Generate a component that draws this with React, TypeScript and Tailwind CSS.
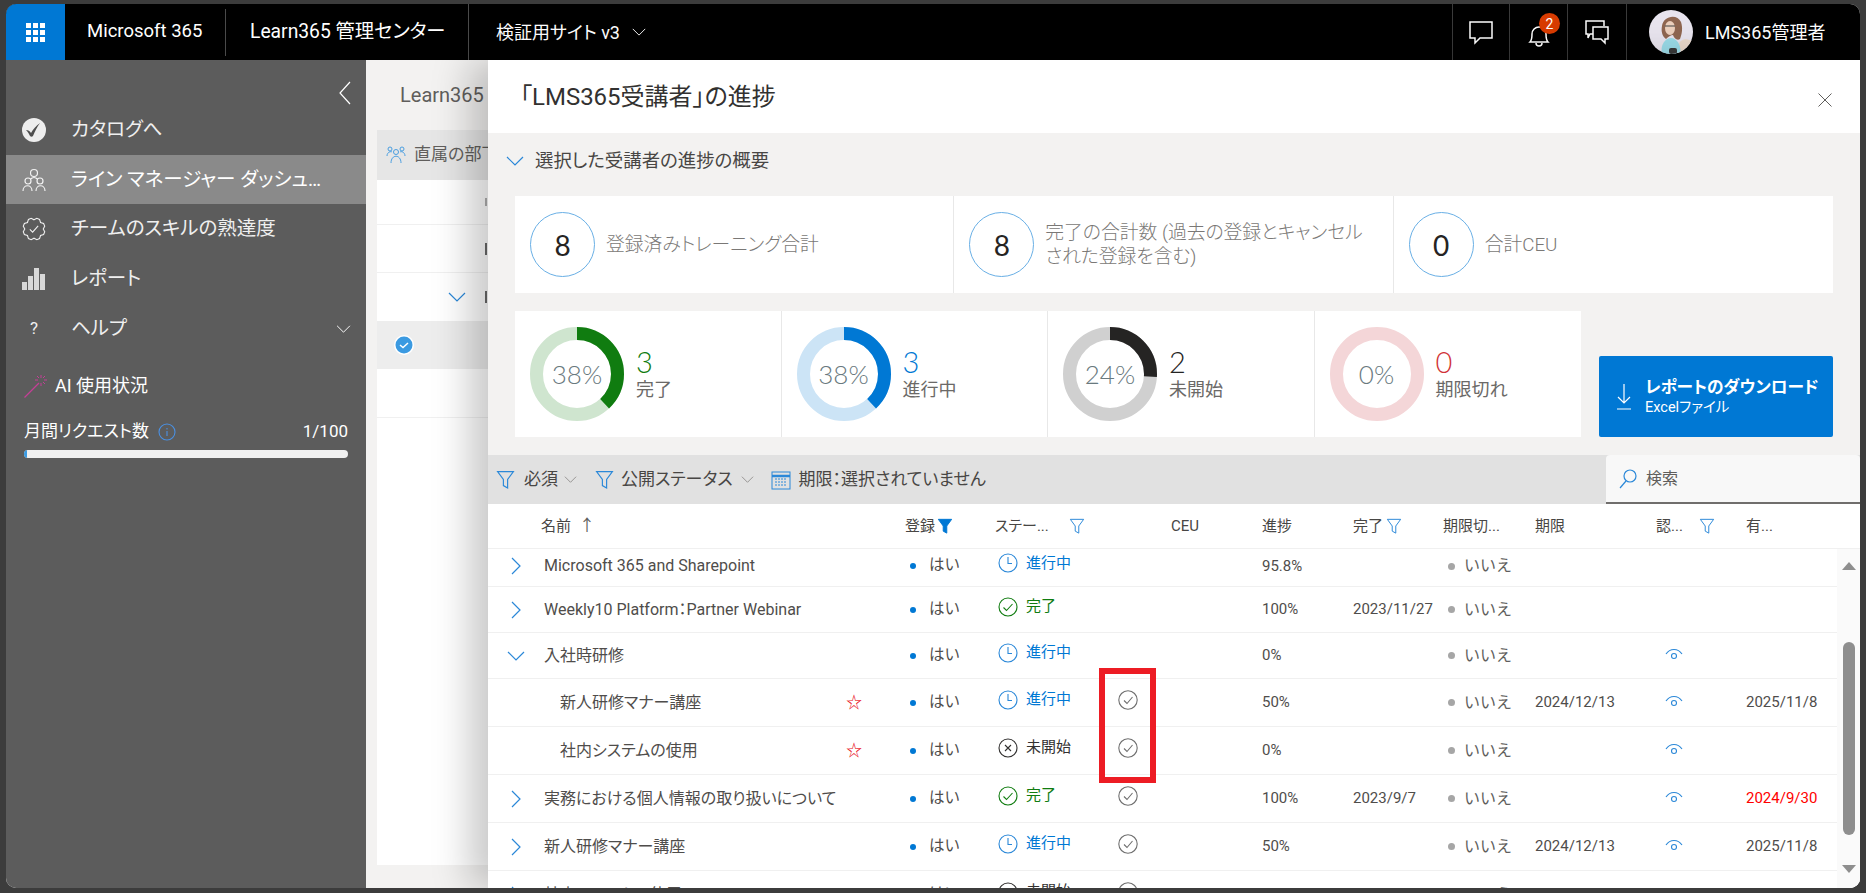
const COLS = 'grid grid-cols-[417px_90px_113px_63px_91px_91px_90px_92px_121px_90px_91px]';

type Status = 'progress' | 'done' | 'none';

interface Row {
  name: string;
  child?: boolean;
  open?: boolean;
  status: Status;
  check?: boolean;
  progress: string;
  completed?: string;
  due?: string;
  eye?: boolean;
  expiry?: string;
  expired?: boolean;
  height: string;
}

const rows: Row[] = [
  { name: 'Microsoft 365 and Sharepoint', status: 'progress', progress: '95.8%', height: 'h-[38px] pb-[3px]' },
  { name: 'Weekly10 Platform：Partner Webinar', status: 'done', progress: '100%', completed: '2023/11/27', height: 'h-[46px]' },
  { name: '入社時研修', open: true, status: 'progress', progress: '0%', eye: true, height: 'h-[46px]' },
  { name: '新人研修マナー講座', child: true, status: 'progress', check: true, progress: '50%', due: '2024/12/13', eye: true, expiry: '2025/11/8', height: 'h-[48px]' },
  { name: '社内システムの使用', child: true, status: 'none', check: true, progress: '0%', eye: true, height: 'h-[48px]' },
  { name: '実務における個人情報の取り扱いについて', status: 'done', check: true, progress: '100%', completed: '2023/9/7', eye: true, expiry: '2024/9/30', expired: true, height: 'h-[48px]' },
  { name: '新人研修マナー講座', status: 'progress', check: true, progress: '50%', due: '2024/12/13', eye: true, expiry: '2025/11/8', height: 'h-[48px]' },
  { name: '社内システムの使用', status: 'none', check: true, progress: '0%', eye: true, height: 'h-[48px]' },
];

// scalloped outline of the skills badge
const badgePoints = Array.from({ length: 24 }, (_, i) => {
  const a = (i / 24) * Math.PI * 2;
  const r = i % 3 === 0 ? 10 : 12;
  return `${(13 + r * Math.sin(a)).toFixed(1)},${(13 - r * Math.cos(a)).toFixed(1)}`;
}).join(' ');

function Funnel({ solid = false, className = 'h-[19px] w-[19px]' }: { solid?: boolean; className?: string }) {
  return (
    <svg viewBox="0 0 18 18" className={className} fill={solid ? '#0078d4' : 'none'} stroke={solid ? '#0078d4' : '#2b88d8'} strokeWidth="1.1">
      <path d="M1.5 1.5h15l-5.5 7.5v8l-4-2.200V9z" />
    </svg>
  );
}

function ChevronDown({ className = 'h-[10px] w-[18px]', color = '#2b88d8' }: { className?: string; color?: string }) {
  return (
    <svg viewBox="0 0 18 10" className={className} fill="none" stroke={color} strokeWidth="1.2">
      <path d="M1 1l8 8 8-8" />
    </svg>
  );
}

function ChevronRight() {
  return (
    <svg viewBox="0 0 10 18" className="h-[18px] w-[10px]" fill="none" stroke="#2b88d8" strokeWidth="1.2">
      <path d="M1 1l8 8-8 8" />
    </svg>
  );
}

function StatusBadge({ status }: { status: Status }) {
  if (status === 'progress') {
    return (
      <div className="flex items-center gap-[8px] pb-[6px] text-[#0078d4]">
        <svg viewBox="0 0 20 20" className="h-[20px] w-[20px]" fill="none" stroke="#2b88d8" strokeWidth="1.1">
          <circle cx="10" cy="10" r="9" />
          <path d="M10 4v6.500h4" />
        </svg>
        <span>進行中</span>
      </div>
    );
  }
  if (status === 'done') {
    return (
      <div className="flex items-center gap-[8px] pb-[6px] text-[#107c10]">
        <svg viewBox="0 0 20 20" className="h-[20px] w-[20px]" fill="none" stroke="#107c10" strokeWidth="1.1">
          <circle cx="10" cy="10" r="9" />
          <path d="M5.500 10.500l3 3 6-6.500" />
        </svg>
        <span>完了</span>
      </div>
    );
  }
  return (
    <div className="flex items-center gap-[8px] pb-[6px] text-[#323130]">
      <svg viewBox="0 0 20 20" className="h-[20px] w-[20px]" fill="none" stroke="#323130" strokeWidth="1.1">
        <circle cx="10" cy="10" r="9" />
        <path d="M7 7l6 6M13 7l-6 6" />
      </svg>
      <span>未開始</span>
    </div>
  );
}

function Donut({ pct, shown, label, count, arc, track, countColor }: { pct: number; shown: number; label: string; count: number; arc: string; track: string; countColor: string }) {
  const r = 40.5;
  const len = 2 * Math.PI * r;
  return (
    <div className="flex items-center gap-[12px] border-r border-[#e8e8e8] pl-[15px] last:border-r-0">
      <div className="relative h-[94px] w-[94px]">
        <svg viewBox="0 0 94 94" className="h-[94px] w-[94px] -rotate-90">
          <circle cx="47" cy="47" r={r} fill="none" stroke={track} strokeWidth="13" />
          <circle cx="47" cy="47" r={r} fill="none" stroke={arc} strokeWidth="13" strokeDasharray={`${(len * pct) / 100} ${len}`} />
        </svg>
        <div className="absolute inset-0 flex items-center justify-center font-['Lato'] text-[26px] font-light text-[#69797e]">{shown}%</div>
      </div>
      <div className="flex flex-col">
        <span className="font-['Lato'] text-[29px] leading-[32px] font-light" style={{ color: countColor }}>{count}</span>
        <span className="text-[18px] leading-[24px] text-[#6b6967]">{label}</span>
      </div>
    </div>
  );
}

function Total({ value, children }: { value: number; children: React.ReactNode }) {
  return (
    <div className="flex items-center gap-[11px] border-r border-[#e8e8e8] pl-[15px] last:border-r-0">
      <div className="flex h-[65px] w-[65px] shrink-0 items-center justify-center rounded-full border border-[#69afe5] font-['Lato'] text-[28px] text-[#252423]">{value}</div>
      <div className="w-[325px] text-[18.800px] leading-[24px] font-light text-[#7a7876]">{children}</div>
    </div>
  );
}

function NavItem({ icon, label, active = false, trailing }: { icon: React.ReactNode; label: string; active?: boolean; trailing?: React.ReactNode }) {
  return (
    <div className={`flex items-center pr-[15px] pl-[16px] ${active ? 'h-[49px] bg-[#8a8a8a] pr-[33px] text-white' : 'h-[50px] text-[#efefef]'}`}>
      <div className="flex w-[24px] shrink-0 items-center justify-center">{icon}</div>
      <span className="ml-[25px] flex-1 truncate text-[19.5px]">{label}</span>
      {trailing}
    </div>
  );
}

function App() {
  return (
    <div className="h-[893px] w-[1866px] overflow-hidden bg-[#3c3c3c] pt-[4px] pr-[6px] pb-[5px] pl-[6px] font-['Roboto','Noto_Sans_CJK_JP',sans-serif] [font-feature-settings:'palt']">
      <div className="flex h-full flex-col overflow-hidden rounded-[10px] bg-white">
        {/* Top bar */}
        <header className="flex h-[56px] shrink-0 items-center bg-black text-white">
          <div className="flex h-full w-[59px] items-center justify-center bg-[#0078d4]">
            <svg viewBox="0 0 19 19" className="h-[19px] w-[19px]" fill="white">
              <rect x="0" y="0" width="5" height="5" /><rect x="7" y="0" width="5" height="5" /><rect x="14" y="0" width="5" height="5" />
              <rect x="0" y="7" width="5" height="5" /><rect x="7" y="7" width="5" height="5" /><rect x="14" y="7" width="5" height="5" />
              <rect x="0" y="14" width="5" height="5" /><rect x="7" y="14" width="5" height="5" /><rect x="14" y="14" width="5" height="5" />
            </svg>
          </div>
          <div className="flex h-[47px] w-[161px] items-center border-r border-[#4a4a4a] pl-[22px] text-[18.500px]">Microsoft 365</div>
          <div className="flex h-full w-[243px] items-center border-r border-[#4a4a4a] pl-[24px] text-[19.300px]">Learn365 管理センター</div>
          <div className="flex items-center gap-[12px] pl-[27px] text-[18px]">
            <span>検証用サイト v3</span>
            <ChevronDown className="h-[8px] w-[14px]" color="#ffffff" />
          </div>
          <div className="ml-auto flex h-full">
            <div className="flex w-[58px] items-center justify-center border-x border-[#3a3a3a]">
              <svg viewBox="0 0 26 26" className="h-[26px] w-[26px]" fill="none" stroke="white" strokeWidth="1.5">
                <path d="M2 3h22v16H12l-5 5v-5H2z" />
              </svg>
            </div>
            <div className="relative flex w-[58px] items-center justify-center border-r border-[#3a3a3a]">
              <svg viewBox="0 0 24 26" className="mt-[5px] h-[26px] w-[24px]" fill="none" stroke="white" strokeWidth="1.5">
                <path d="M3 20c2-2 2-4 2-8a7 7 0 0114 0c0 4 0 6 2 8z" />
                <path d="M9 21c0 4 6 4 6 0" />
              </svg>
              <div className="absolute top-[9px] left-[29px] flex h-[21px] w-[21px] items-center justify-center rounded-full bg-[#d83b01] text-[14px] leading-none">2</div>
            </div>
            <div className="flex w-[59px] items-center justify-center border-r border-[#3a3a3a]">
              <svg viewBox="0 0 26 26" className="h-[26px] w-[26px]" fill="none" stroke="white" strokeWidth="1.5">
                <path d="M9 15H6l-2 4v-4H2V2h18v5" />
                <path d="M9 8h15v12h-3v4l-4-4H9z" />
              </svg>
            </div>
            <div className="flex w-[233px] items-center pl-[22px]">
              <svg viewBox="0 0 44 44" className="h-[44px] w-[44px] rounded-full">
                <rect width="44" height="44" fill="#e8e4ee" />
                <path d="M28 44c0-9 2-14 9-15l7 2v13z" fill="#ead9ca" />
                <path d="M13 44c-2-9 3-16 9-16s11 8 9 16z" fill="#9adbe8" />
                <path d="M13 16c1-10 15-13 19-4 2 6 1 12-1 17-3 2-6-1-7-4-2 0-5 2-7 4-4-3-5-8-4-13z" fill="#8f6650" />
                <ellipse cx="21" cy="18" rx="5" ry="7" fill="#ecd0bd" />
                <path d="M16 16h10" stroke="#444" strokeWidth="1.2" />
                <rect x="20" y="38" width="8" height="6" rx="2" fill="#3a3a3a" />
              </svg>
              <span className="ml-[12px] text-[18px]">LMS365管理者</span>
            </div>
          </div>
        </header>

        <div className="flex min-h-0 flex-1">
          {/* Left nav */}
          <aside className="flex w-[360px] shrink-0 flex-col bg-[#5c5c5c]">
            <div className="flex h-[45px] items-end justify-end pr-[15px]">
              <svg viewBox="0 0 12 24" className="h-[24px] w-[12px]" fill="none" stroke="white" strokeWidth="1.2">
                <path d="M11 1L1 12l10 11" />
              </svg>
            </div>
            <div>
              <NavItem
                label="カタログへ"
                icon={
                  <svg viewBox="0 0 24 24" className="h-[24px] w-[24px]">
                    <circle cx="12" cy="12" r="12" fill="#eeeeee" />
                    <path d="M4 12c2 0 4 1 5 3 2-4 5-7 9-10-3 4-5 8-7 13-1 1-2 1-3 0-1-2-2-4-4-6z" fill="#4f4f4f" />
                  </svg>
                }
              />
              <NavItem
                active
                label="ライン マネージャー ダッシュボード"
                icon={
                  <svg viewBox="0 0 24 24" className="h-[24px] w-[24px]" fill="none" stroke="#f2f2f2" strokeWidth="1.2">
                    <circle cx="12" cy="5" r="3.500" />
                    <circle cx="6" cy="13" r="3" />
                    <circle cx="18" cy="13" r="3" />
                    <path d="M1 23c0-7 9-7 9 0M14 23c0-7 9-7 9 0M8.500 11c2-2 5-2 7 0" />
                  </svg>
                }
              />
              <NavItem
                label="チームのスキルの熟達度"
                icon={
                  <svg viewBox="0 0 26 26" className="h-[26px] w-[26px]" fill="none" stroke="#efefef" strokeWidth="1.2">
                    <polygon points={badgePoints} />
                    <path d="M8.500 13.500l3 3 6-7" />
                  </svg>
                }
              />
              <NavItem
                label="レポート"
                icon={
                  <svg viewBox="0 0 24 22" className="h-[22px] w-[24px]" fill="#d8d8d8">
                    <rect x="0" y="14" width="5" height="8" />
                    <rect x="6" y="8" width="5" height="14" />
                    <rect x="12" y="0" width="5" height="22" />
                    <rect x="18" y="6" width="5" height="16" />
                  </svg>
                }
              />
              <NavItem
                label="ヘルプ"
                icon={<span className="text-[17px]">?</span>}
                trailing={<ChevronDown className="h-[8px] w-[15px]" color="#ffffff" />}
              />
            </div>
            <div className="mt-[18px] flex items-center gap-[7px] pl-[18px] text-white">
              <svg viewBox="0 0 24 24" className="h-[24px] w-[24px]" fill="none" stroke="#c43e96" strokeWidth="1.2">
                <path d="M0.500 23.500L15 9" />
                <path d="M17 1v3M17 9v3M11 6h3M20 6h3M13 2l2 2M21 2l-2 2M21 10l-2-2" strokeWidth="1" />
              </svg>
              <span className="text-[18px]">AI 使用状況</span>
            </div>
            <div className="mt-[20px] flex items-center pr-[18px] pl-[18px] text-[17px] text-white">
              <span>月間リクエスト数</span>
              <svg viewBox="0 0 18 18" className="ml-[9px] h-[18px] w-[18px]" fill="none" stroke="#4a90e2" strokeWidth="1.1">
                <circle cx="9" cy="9" r="8" />
                <path d="M9 8v5M9 5v1.500" />
              </svg>
              <span className="ml-auto">1/100</span>
            </div>
            <div className="mt-[5px] mr-[18px] ml-[18px] h-[8px] overflow-hidden rounded-full bg-[#f0f0f0]">
              <div className="h-full w-[3px] bg-[#3b9ae1]" />
            </div>
          </aside>

          {/* Page behind the panel + panel */}
          <main className="relative min-w-0 flex-1 bg-[#f3f2f1]">
            <div className="flex h-[70px] items-center pl-[34px] text-[20px] text-[#605e5c]">Learn365</div>
            <div className="ml-[11px] h-[735px] bg-white">
              <div className="flex h-[50px] items-center gap-[8px] bg-[#e6e6e6] pl-[9px] text-[17px] text-[#605e5c]">
                <svg viewBox="0 0 20 18" className="h-[18px] w-[20px]" fill="none" stroke="#4a9ee0" strokeWidth="1">
                  <circle cx="10" cy="6" r="2.500" /><circle cx="4" cy="3" r="2" /><circle cx="16" cy="3" r="2" />
                  <path d="M5 17c0-9 10-9 10 0M1 10c0-4 4-5 5-4M19 10c0-4-4-5-5-4" />
                </svg>
                <span>直属の部下</span>
              </div>
              {/* names in the page are hidden by the panel, only their first pixels show */}
              <div className="flex h-[45px] items-center border-b border-[#f0f0f0] pl-[108px]">
                <div className="h-[8px] w-[2px] bg-[#b0b0b0]" />
              </div>
              <div className="flex h-[48px] items-center border-b border-[#f0f0f0] pl-[108px]">
                <div className="h-[12px] w-[2px] bg-[#6a6a6a]" />
              </div>
              <div className="flex h-[48px] items-center pl-[71px]">
                <ChevronDown />
                <div className="ml-[19px] h-[12px] w-[2px] bg-[#6a6a6a]" />
              </div>
              <div className="flex h-[48px] items-center bg-[#ededed] pl-[17px]">
                <svg viewBox="0 0 20 20" className="h-[20px] w-[20px]">
                  <circle cx="10" cy="10" r="10" fill="white" />
                  <circle cx="10" cy="10" r="8.500" fill="#3b9ae1" />
                  <path d="M6 10l3 2.500 5-4.500" fill="none" stroke="white" strokeWidth="1.500" />
                </svg>
              </div>
              <div className="h-[49px] border-b border-[#f0f0f0]" />
            </div>

            <section className="absolute inset-y-0 right-0 left-[122px] flex flex-col bg-white shadow-[-18px_0_36px_rgba(0,0,0,0.22)]">
              <div className="flex h-[73px] shrink-0 items-center justify-between pr-[28px] pl-[32px]">
                <h1 className="text-[24px] text-[#323130]">「LMS365受講者」の進捗</h1>
                <svg viewBox="0 0 14 14" className="mt-[6px] h-[14px] w-[14px]" fill="none" stroke="#605e5c" strokeWidth="1">
                  <path d="M0.500 0.500l13 13M13.500 0.500l-13 13" />
                </svg>
              </div>

              <div className="h-[322px] shrink-0 bg-[#f3f2f1] px-[27px]">
                <div className="-ml-[9px] flex h-[63px] items-center gap-[11px] pb-[8px]">
                  <ChevronDown />
                  <span className="text-[18.400px] text-[#484644]">選択した受講者の進捗の概要</span>
                </div>
                <div className="grid h-[97px] grid-cols-3 bg-white">
                  <Total value={8}>登録済みトレーニング合計</Total>
                  <Total value={8}>完了の合計数 (過去の登録とキャンセルされた登録を含む)</Total>
                  <Total value={0}>合計CEU</Total>
                </div>
                <div className="mt-[18px] flex h-[126px] items-end">
                  <div className="grid h-full w-[1066px] grid-cols-4 bg-white">
                    <Donut pct={38} shown={38} label="完了" count={3} arc="#107c10" track="#cfe5cf" countColor="#107c10" />
                    <Donut pct={38} shown={38} label="進行中" count={3} arc="#0078d4" track="#cce4f6" countColor="#0078d4" />
                    <Donut pct={26} shown={24} label="未開始" count={2} arc="#252423" track="#d0d0d0" countColor="#252423" />
                    <Donut pct={0} shown={0} label="期限切れ" count={0} arc="#d13438" track="#f4d6d8" countColor="#d13438" />
                  </div>
                  <div className="ml-[18px] flex h-[81px] flex-1 items-center gap-[14px] rounded-[2px] bg-[#0078d4] pl-[18px] text-white">
                    <svg viewBox="0 0 14 26" className="h-[26px] w-[14px]" fill="none" stroke="white" strokeWidth="1.200">
                      <path d="M7 0v19M1 13l6 6 6-6M0 25h14" />
                    </svg>
                    <div className="flex flex-col">
                      <span className="text-[16.700px] leading-[22px] font-bold">レポートのダウンロード</span>
                      <span className="text-[14.500px] leading-[18px]">Excelファイル</span>
                    </div>
                  </div>
                </div>
              </div>

              {/* Filters */}
              <div className="flex h-[49px] shrink-0 items-center bg-[#e1e1e1] pl-[8px] text-[17px] text-[#484644]">
                <Funnel />
                <span className="ml-[9px]">必須</span>
                <ChevronDown className="ml-[6px] h-[7px] w-[13px]" color="#8a8886" />
                <Funnel className="ml-[18px] h-[19px] w-[19px]" />
                <span className="ml-[7px]">公開ステータス</span>
                <ChevronDown className="ml-[8px] h-[7px] w-[13px]" color="#8a8886" />
                <svg viewBox="0 0 20 20" className="ml-[17px] h-[20px] w-[20px]" fill="none" stroke="#2b88d8" strokeWidth="1">
                  <rect x="1" y="2" width="18" height="17" />
                  <path d="M1 6h18" strokeWidth="2.500" />
                  <path d="M4 9h12M4 12h12M4 15h12" strokeDasharray="2 1" />
                </svg>
                <span className="ml-[8px]">期限：選択されていません</span>
                <div className="ml-auto flex h-full w-[254px] items-center rounded-t-[4px] border-b-2 border-[#706e6c] bg-[#f8f8f8] pl-[13px] text-[16px] text-[#605e5c]">
                  <svg viewBox="0 0 18 20" className="h-[20px] w-[18px]" fill="none" stroke="#2b88d8" strokeWidth="1.200">
                    <circle cx="11" cy="7" r="6" />
                    <path d="M7 12l-6 7" />
                  </svg>
                  <span className="ml-[9px]">検索</span>
                </div>
              </div>

              {/* Table */}
              <div className={`${COLS} h-[45px] shrink-0 items-center border-b border-[#f0f0f0] text-[15px] text-[#484644]`}>
                <div className="flex items-center gap-[8px] pl-[53px]">
                  <span>名前</span>
                  <span className="text-[16px] text-[#605e5c]">↑</span>
                </div>
                <div className="flex items-center gap-[2px]"><span>登録</span><Funnel solid className="h-[16px] w-[16px]" /></div>
                <div className="flex items-center gap-[20px]"><span>ステー...</span><Funnel className="h-[16px] w-[16px]" /></div>
                <div />
                <div>CEU</div>
                <div>進捗</div>
                <div className="flex items-center gap-[3px]"><span>完了</span><Funnel className="h-[16px] w-[16px]" /></div>
                <div>期限切...</div>
                <div>期限</div>
                <div className="flex items-center gap-[16px]"><span>認...</span><Funnel className="h-[16px] w-[16px]" /></div>
                <div>有...</div>
              </div>

              <div className="relative flex min-h-0 flex-1 overflow-hidden">
                <div className="w-[1349px] shrink-0 text-[15px] text-[#4f4d4b]">
                  {rows.map((row, i) => (
                    <div key={i} className={`${COLS} ${row.height} items-center border-b border-[#f0f0f0]`}>
                      <div className="flex items-center">
                        <div className="flex w-[56px] shrink-0 justify-center">
                          {row.child ? null : row.open ? <ChevronDown /> : <ChevronRight />}
                        </div>
                        <span className={`flex-1 text-[16px] ${row.child ? 'pl-[16px]' : ''}`}>{row.name}</span>
                        {row.child && <span className="pr-[43px] text-[16px] leading-none text-[#e81123]">☆</span>}
                      </div>
                      <div className="flex items-center gap-[13px] pl-[5px]">
                        <span className="h-[6px] w-[6px] rounded-full bg-[#0078d4]" />
                        <span className="text-[15.500px] [font-feature-settings:normal]">はい</span>
                      </div>
                      <div className="pl-[3px]"><StatusBadge status={row.status} /></div>
                      <div className="pb-[6px] pl-[10px]">
                        {row.check && (
                          <svg viewBox="0 0 20 20" className="h-[20px] w-[20px]" fill="none" stroke="#6f6f6f" strokeWidth="1.1">
                            <circle cx="10" cy="10" r="9.200" />
                            <path d="M6 10.500l3 3 5.500-6.500" />
                          </svg>
                        )}
                      </div>
                      <div />
                      <div>{row.progress}</div>
                      <div>{row.completed}</div>
                      <div className="flex items-center gap-[9px] pl-[5px] text-[#605e5c]">
                        <span className="h-[7px] w-[7px] rounded-full bg-[#a6a6a6]" />
                        <span className="text-[16px] [font-feature-settings:normal]">いいえ</span>
                      </div>
                      <div>{row.due}</div>
                      <div className="pb-[2px] pl-[9px]">
                        {row.eye && (
                          <svg viewBox="0 0 18 14" className="h-[14px] w-[18px]" fill="none" stroke="#2b88d8" strokeWidth="1.100">
                            <path d="M1 6c4-6 12-6 16 0" />
                            <circle cx="9" cy="8" r="2.500" />
                          </svg>
                        )}
                      </div>
                      <div className={row.expired ? 'text-[#ff0000]' : ''}>{row.expiry}</div>
                    </div>
                  ))}
                </div>

                {/* Scrollbar */}
                <div className="flex h-[339px] flex-1 flex-col items-center bg-[#fafafa] pt-[13px]">
                  <div className="h-0 w-0 border-x-[7px] border-b-[8px] border-x-transparent border-b-[#8e8e8e]" />
                  <div className="mt-[72px] h-[193px] w-[12px] rounded-full bg-[#8e8e8e]" />
                  <div className="mt-[30px] h-0 w-0 border-x-[7px] border-t-[8px] border-x-transparent border-t-[#8e8e8e]" />
                </div>

                {/* Annotation drawn on the screenshot */}
                <div className="pointer-events-none absolute top-[119px] left-[611px] h-[115px] w-[57px] border-[6px] border-[#ed1c24]" />
              </div>
            </section>
          </main>
        </div>
      </div>
    </div>
  );
}

export default App;
